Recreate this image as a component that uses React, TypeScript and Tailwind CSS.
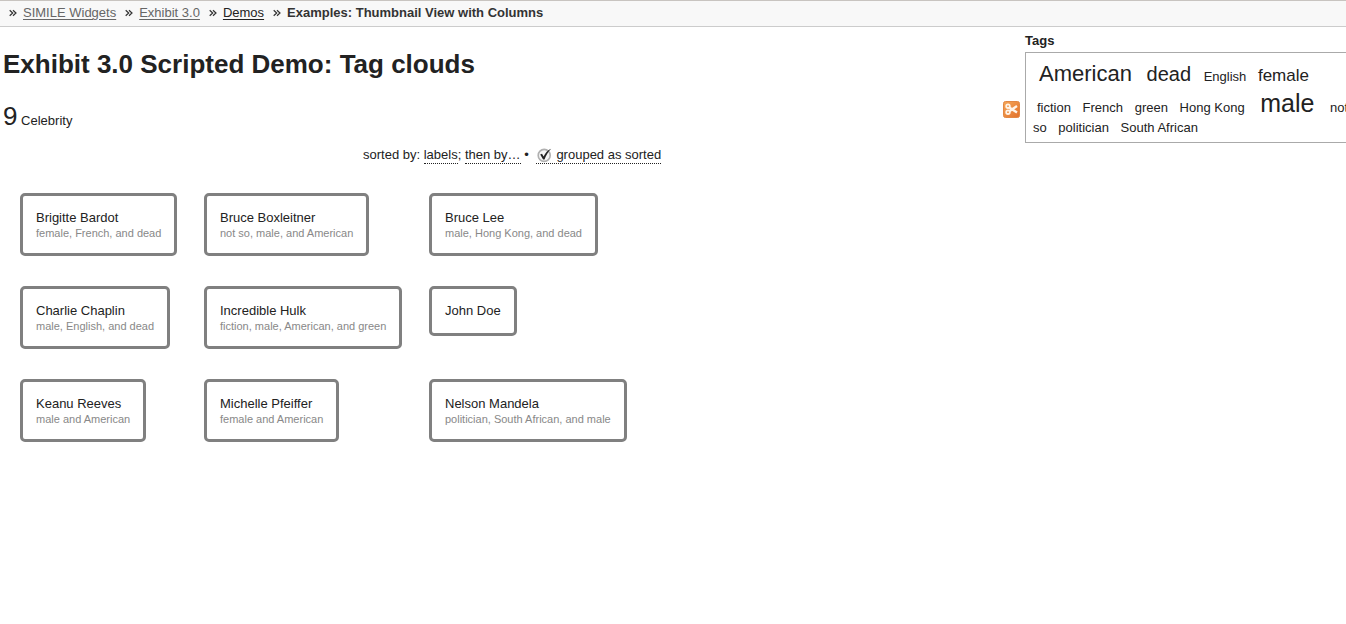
import React from "react";

type Celebrity = { name: string; tags?: string };

const rows: Celebrity[][] = [
  [
    { name: "Brigitte Bardot", tags: "female, French, and dead" },
    { name: "Bruce Boxleitner", tags: "not so, male, and American" },
    { name: "Bruce Lee", tags: "male, Hong Kong, and dead" },
  ],
  [
    { name: "Charlie Chaplin", tags: "male, English, and dead" },
    { name: "Incredible Hulk", tags: "fiction, male, American, and green" },
    { name: "John Doe" },
  ],
  [
    { name: "Keanu Reeves", tags: "male and American" },
    { name: "Michelle Pfeiffer", tags: "female and American" },
    { name: "Nelson Mandela", tags: "politician, South African, and male" },
  ],
];

const small = "px-1 text-[13px] leading-[20px]";
const tags: { label: string; style: string }[] = [
  { label: "American", style: "px-1.5 text-[22px] leading-[28px]" },
  { label: "dead", style: "px-[5px] text-[20px] leading-[24px]" },
  { label: "English", style: small },
  { label: "female", style: "px-1 text-[17px] leading-[22px]" },
  { label: "fiction", style: small },
  { label: "French", style: small },
  { label: "green", style: small },
  { label: "Hong Kong", style: small },
  { label: "male", style: "px-2 text-[25px] leading-[30px]" },
  { label: "not so", style: small },
  { label: "politician", style: small },
  { label: "South African", style: small },
];

function Crumb({ children }: { children: React.ReactNode }) {
  return (
    <li className="flex items-center gap-1.5">
      <svg aria-hidden="true" className="h-2 w-2" viewBox="0 0 8 8" fill="none" stroke="#333" strokeWidth="1.2">
        <path d="M0.7 1.2 3.7 4 0.7 6.8M4 1.2 7 4 4 6.8" />
      </svg>
      {children}
    </li>
  );
}

function CheckIcon() {
  return (
    <svg aria-hidden="true" className="mr-1 inline-block h-4 w-4 align-[-4px]" viewBox="0 0 16 16" fill="none">
      <circle cx="8.2" cy="8.4" r="6" fill="#f4f4f4" stroke="#b0b0b0" strokeWidth="1.6" />
      <path d="M4.2 7.4 6 6.8l1.6 2.6C9.4 6 11.6 3.3 15.2 1.8 12.2 4.8 10 8.3 8.5 12.4H7.1Z" fill="#222" />
    </svg>
  );
}

function ScissorsIcon() {
  return (
    <svg aria-hidden="true" className="h-[17px] w-[17px]" viewBox="0 0 17 17" fill="none">
      <defs>
        <linearGradient id="orange" x1="0" y1="0" x2="1" y2="1">
          <stop offset="0" stopColor="#f5a758" />
          <stop offset="1" stopColor="#e2702a" />
        </linearGradient>
      </defs>
      <rect x="0.5" y="0.5" width="16" height="16" rx="2" fill="url(#orange)" stroke="#e28743" />
      <g stroke="#fff4e8" strokeWidth="1.8">
        <circle cx="5" cy="5.2" r="1.8" />
        <circle cx="5" cy="11.2" r="1.8" />
        <path d="M6.3 6.4 14 11.6M6.3 10.2 14 5" strokeWidth="2.4" />
      </g>
    </svg>
  );
}

const sortLink = "border-b border-dotted border-[#222] pb-px";

export default function App() {
  return (
    <div className="min-h-screen overflow-hidden bg-white font-['Liberation_Sans',Arial,sans-serif] text-[13px] leading-[18px] text-[#222]">
      <nav aria-label="Breadcrumb" className="border-y border-[#ccc] border-t-[#c8c4c0] bg-[#f8f8f8] px-[9px] pt-[3px] pb-1">
        <ol className="flex gap-[9px]">
          <Crumb>
            <a href="#widgets" className="text-[#666] underline underline-offset-2">SIMILE Widgets</a>
          </Crumb>
          <Crumb>
            <a href="#exhibit" className="text-[#666] underline underline-offset-2">Exhibit 3.0</a>
          </Crumb>
          <Crumb>
            <a href="#demos" className="underline underline-offset-2">Demos</a>
          </Crumb>
          <Crumb>
            <strong className="text-[#333]">Examples: Thumbnail View with Columns</strong>
          </Crumb>
        </ol>
      </nav>

      <div className="-mr-2 flex">
        <main className="min-w-0 flex-1 pl-[3px]">
          <h1 className="pt-5 text-[26px] leading-[34px] font-bold">Exhibit 3.0 Scripted Demo: Tag clouds</h1>
          <div className="flex items-start justify-between pt-5 pr-[5px]">
            <p className="leading-[30px]">
              <span className="text-[26px]">9</span> Celebrity
            </p>
            <button type="button" aria-label="Copy">
              <ScissorsIcon />
            </button>
          </div>
          <div className="pt-2.5 pl-[360px]">
            sorted by:{" "}
            <a href="#labels" className={sortLink}>labels</a>;{" "}
            <a href="#then" className={sortLink}>then by…</a> •{" "}
            <a href="#grouped" className="ml-1 border-b border-dotted border-[#222] pb-px">
              <CheckIcon />
              grouped as sorted
            </a>
          </div>
          <table className="mt-[14px] ml-0.5 w-[640px] table-fixed border-collapse">
            <colgroup>
              <col className="w-[184px]" />
              <col className="w-[225px]" />
              <col />
            </colgroup>
            <tbody>
              {rows.map((row) => (
                <tr key={row[0].name}>
                  {row.map((person) => (
                    <td key={person.name} className="py-[15px] pr-0 pl-[15px] align-top">
                      <div className="w-fit rounded-[5px] border-3 border-[#808080] p-[13px] whitespace-nowrap">
                        <div>{person.name}</div>
                        {person.tags && (
                          <div className="text-[11px] leading-[13px] text-[#888]">{person.tags}</div>
                        )}
                      </div>
                    </td>
                  ))}
                </tr>
              ))}
            </tbody>
          </table>
        </main>

        <aside className="w-[329px] shrink-0 pt-[5px]">
          <h2 className="font-bold">Tags</h2>
          <div className="mt-[2px] border border-[#aaa] pt-[7px] pb-1 pl-[7px]">
            {tags.map((tag) => (
              <React.Fragment key={tag.label}>
                <a href="#tag" className={tag.style}>{tag.label}</a>{" "}
              </React.Fragment>
            ))}
          </div>
        </aside>
      </div>
    </div>
  );
}
